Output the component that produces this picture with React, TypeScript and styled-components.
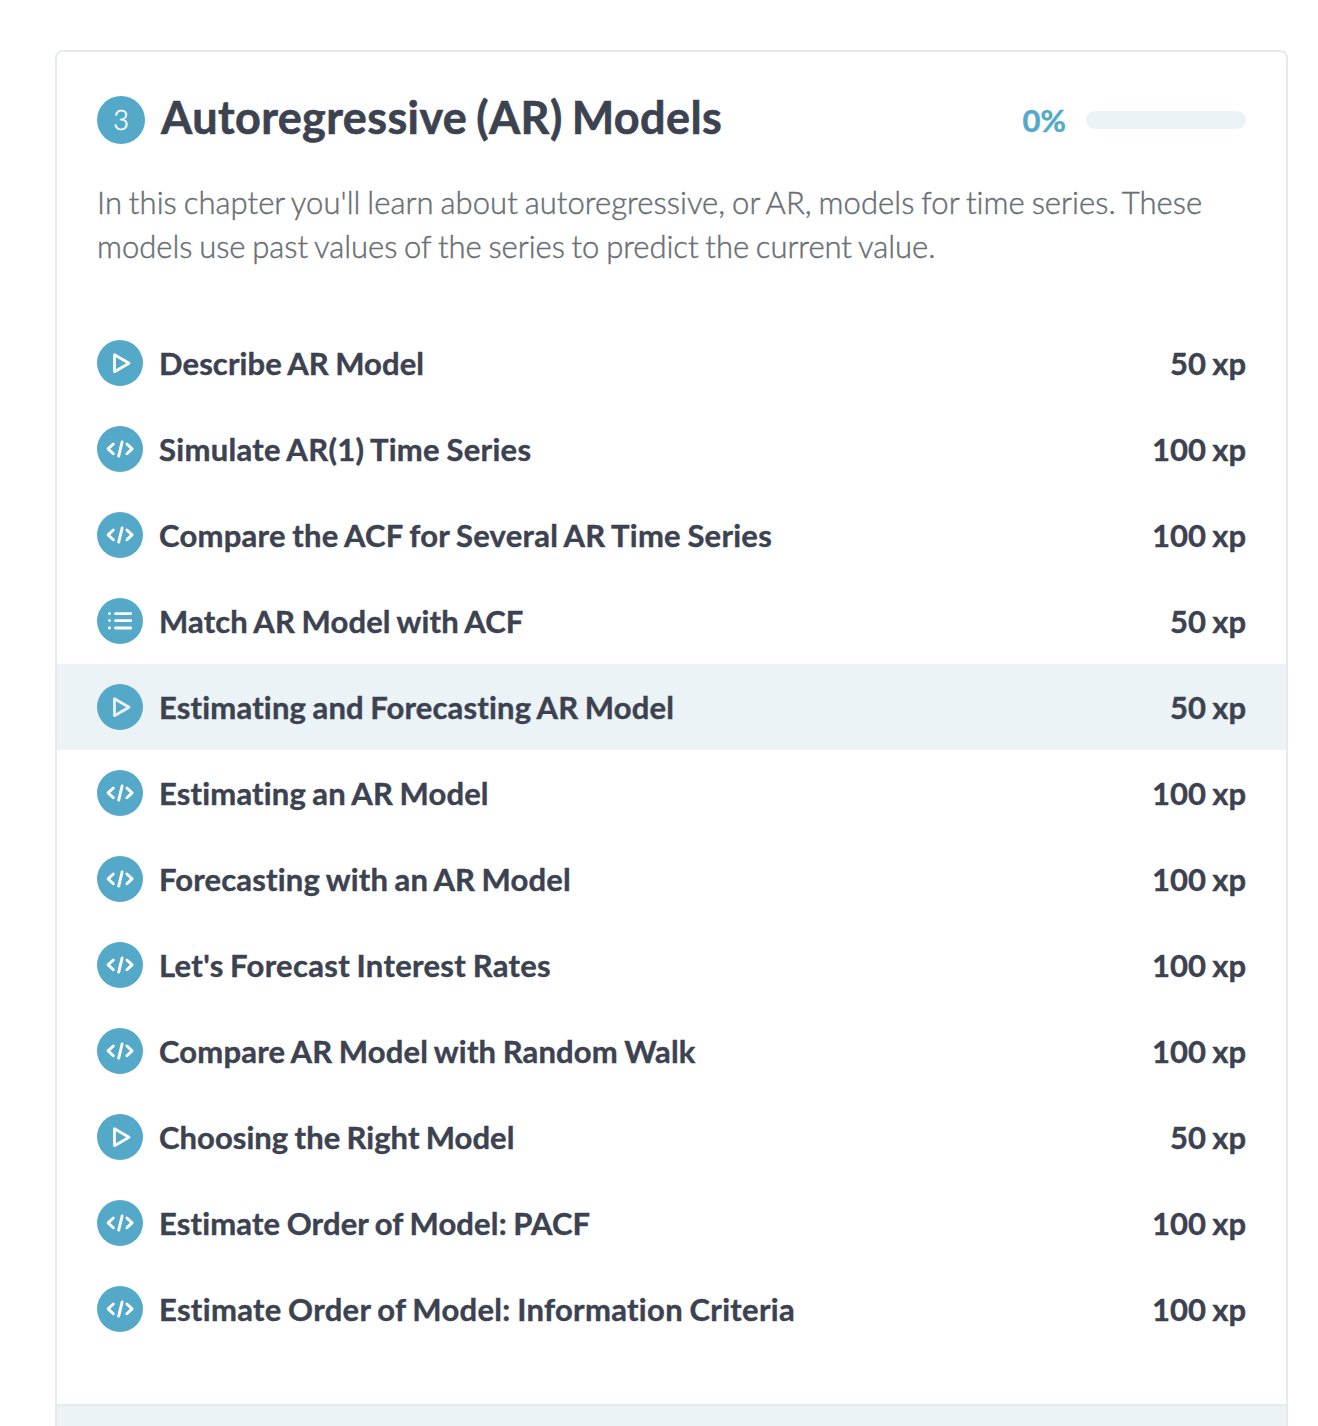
import React from "react";
import styled, { createGlobalStyle } from "styled-components";

const Global = createGlobalStyle`
  body { margin: 0; background: #fff; font-family: Lato, "Open Sans", sans-serif; color: #3d4251; overflow: hidden; font-variant-ligatures: none; }
  * { box-sizing: border-box; }
`;
const Page = styled.main`
  height: 1426px;
  overflow: hidden;
  padding: 50px 30px 0 55px;
`;
const Card = styled.section`
  height: 1420px;
  border: 2px solid #e6eaeb;
  border-radius: 8px;
  display: flex;
  flex-direction: column;
`;
const Header = styled.header`
  display: flex;
  align-items: center;
  height: 48px;
  margin: 44px 40px 0;
`;
const ChapterNumber = styled.span`
  width: 48px;
  height: 48px;
  border-radius: 50%;
  background: #54a9c9;
  color: #fff;
  font-size: 27px;
  font-weight: 300;
  -webkit-text-stroke: 0.5px #fff;
  line-height: 48px;
  text-align: center;
`;
const Title = styled.h1`
  margin: 0 auto 6px 16px;
  font-size: 45px;
  line-height: 48px;
  font-weight: 700;
  letter-spacing: 0.4px;
  word-spacing: -2.4px;
  -webkit-text-stroke: 0.6px currentColor;
  white-space: nowrap;
`;
const Percent = styled.span`
  font-size: 31px;
  font-weight: 700;
  color: #54a9c9;
  margin-right: 20px;
  -webkit-text-stroke: 0.4px currentColor;
`;
const Track = styled.div`
  width: 160px;
  height: 18px;
  border-radius: 9px;
  background: #ebf3f6;
`;
const Description = styled.p`
  margin: 36px 40px 0;
  height: 88px;
  font-size: 31px;
  line-height: 44px;
  font-weight: 300;
  word-spacing: -1.6px;
  -webkit-text-stroke: 0.45px currentColor;
  color: #686f75;
  white-space: nowrap;
`;
const Line = styled.span<{ $tracking: number }>`
  display: block;
  letter-spacing: ${(p) => p.$tracking}px;
`;
const List = styled.ul`
  list-style: none;
  margin: 52px 0 0;
  padding: 0;
`;
const Row = styled.li<{ $active?: boolean }>`
  display: flex;
  align-items: center;
  height: 86px;
  padding: 0 40px;
  background: ${(p) => (p.$active ? "#ebf3f6" : "transparent")};
  font-size: 31px;
  font-weight: 700;
  word-spacing: -1.3px;
  -webkit-text-stroke: 0.4px currentColor;
  white-space: nowrap;
`;
const Badge = styled.span`
  width: 46px;
  height: 46px;
  border-radius: 50%;
  background: #54a9c9;
  margin-right: 16px;
  svg { display: block; }
`;
const Name = styled.span<{ $tracking: number }>`
  margin-right: auto;
  letter-spacing: ${(p) => p.$tracking}px;
`;
const Footer = styled.div`
  margin-top: 52px;
  flex: 1;
  border-top: 2px solid #e6eaeb;
  background: #ebf3f6;
`;

type Kind = "play" | "code" | "list";

function Icon({ kind, active }: { kind: Kind; active?: boolean }) {
  return (
    <svg width="46" height="46" viewBox="0 0 46 46" fill="none" stroke={active ? "#ebf3f6" : "#fff"} strokeWidth="3" strokeLinecap="round" strokeLinejoin="round">
      {kind === "play" && <path d="M17.500 14.700v17L32 23.200z" strokeWidth="2.800" />}
      {kind === "code" && <path d="M16.300 18l-5.200 4.900 5.200 4.900M29.900 18l5.200 4.900-5.200 4.900M25.100 16l-3.400 14.200" strokeWidth="2.900" />}
      {kind === "list" && <path d="M18.500 15.600h15.200M18.500 22.600h15.200M18.500 30h15.200M12.400 15.600h.01M12.400 22.600h.01M12.400 30h.01" strokeWidth="2.900" />}
    </svg>
  );
}

const lessons: { kind: Kind; name: string; xp: number; tracking: number; active?: boolean }[] = [
  { kind: "play", name: "Describe AR Model", xp: 50, tracking: 0.1 },
  { kind: "code", name: "Simulate AR(1) Time Series", xp: 100, tracking: 0.3 },
  { kind: "code", name: "Compare the ACF for Several AR Time Series", xp: 100, tracking: 0.25 },
  { kind: "list", name: "Match AR Model with ACF", xp: 50, tracking: 0.15 },
  { kind: "play", name: "Estimating and Forecasting AR Model", xp: 50, tracking: 0.17, active: true },
  { kind: "code", name: "Estimating an AR Model", xp: 100, tracking: 0.16 },
  { kind: "code", name: "Forecasting with an AR Model", xp: 100, tracking: 0.16 },
  { kind: "code", name: "Let's Forecast Interest Rates", xp: 100, tracking: 0.31 },
  { kind: "code", name: "Compare AR Model with Random Walk", xp: 100, tracking: 0.17 },
  { kind: "play", name: "Choosing the Right Model", xp: 50, tracking: 0.04 },
  { kind: "code", name: "Estimate Order of Model: PACF", xp: 100, tracking: 0.15 },
  { kind: "code", name: "Estimate Order of Model: Information Criteria", xp: 100, tracking: 0.31 },
];

export default function App() {
  return (
    <Page>
      <Global />
      <Card>
        <Header>
          <ChapterNumber>3</ChapterNumber>
          <Title>Autoregressive (AR) Models</Title>
          <Percent>0%</Percent>
          <Track />
        </Header>
        <Description>
          <Line $tracking={0.057}>
            In this chapter you'll learn about autoregressive, or AR, models for time series. These{" "}
          </Line>
          <Line $tracking={-0.03}>
            models use past values of the series to predict the current value.
          </Line>
        </Description>
        <List>
          {lessons.map((l) => (
            <Row key={l.name} $active={l.active}>
              <Badge><Icon kind={l.kind} active={l.active} /></Badge>
              <Name $tracking={l.tracking}>{l.name}</Name>
              <span>{l.xp} xp</span>
            </Row>
          ))}
        </List>
        <Footer />
      </Card>
    </Page>
  );
}
